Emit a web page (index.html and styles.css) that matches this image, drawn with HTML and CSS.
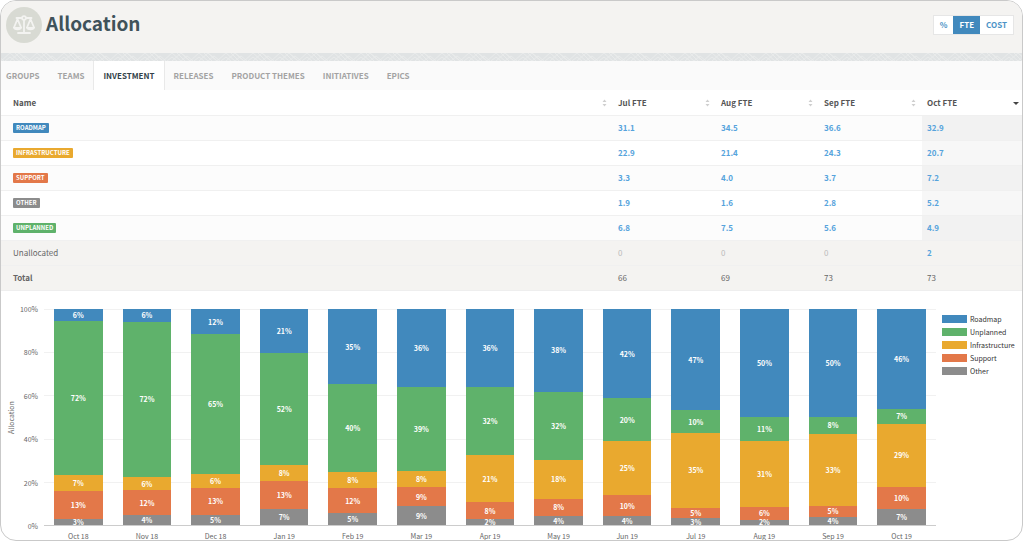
FILE: index.html
```html
<!DOCTYPE html>
<html lang="en">
<head>
<meta charset="utf-8">
<title>Allocation</title>
<link rel="stylesheet" href="styles.css">
</head>
<body>
<main class="card">
  <header class="header">
    <svg class="logo" viewBox="0 0 36 36" aria-hidden="true">
      <circle cx="18" cy="18" r="18" fill="#d8dad3"/>
      <g fill="none" stroke="#f3f3f1" stroke-width="1.800" stroke-linecap="round" stroke-linejoin="round">
        <path d="M10.500 11H15.500M20.500 11H25.500M18 13V25.500M12 26H24"/>
        <circle cx="18" cy="11" r="1.900"/>
        <path d="M11.500 12L8 20.500M11.500 12L15 20.500M24.500 12L21 20.500M24.500 12L28 20.500"/>
      </g>
      <path fill="#f3f3f1" d="M7 20H16Q15.500 23.200 11.500 23.200Q7.500 23.200 7 20ZM20 20H29Q28.500 23.200 24.500 23.200Q20.500 23.200 20 20Z"/>
    </svg>
    <h1 class="title">Allocation</h1>
    <div class="units">
      <button class="unit" type="button">%</button>
      <button class="unit unit-active" type="button">FTE</button>
      <button class="unit" type="button">COST</button>
    </div>
  </header>
  <svg class="band" aria-hidden="true">
    <defs>
      <pattern id="chevrons" width="27" height="8" patternUnits="userSpaceOnUse">
        <path d="M0 8L9 0L18 8M4 8L9 4L14 8M13 -1L22 8M17 -1L27 8M9 8L18 0L27 8M18 8L24 3L30 8M-9 8L-3 3L3 8" fill="none" stroke="#e9ebeb" stroke-width="1"/>
      </pattern>
    </defs>
    <rect width="100%" height="8" fill="url(#chevrons)"/>
  </svg>
  <nav class="tabs">
    <a class="tab" href="#groups">GROUPS</a>
    <a class="tab" href="#teams">TEAMS</a>
    <a class="tab tab-active" href="#investment" aria-current="page">INVESTMENT</a>
    <a class="tab" href="#releases">RELEASES</a>
    <a class="tab" href="#themes">PRODUCT THEMES</a>
    <a class="tab" href="#initiatives">INITIATIVES</a>
    <a class="tab" href="#epics">EPICS</a>
  </nav>
  <table class="table">
    <colgroup><col><col class="month"><col class="month"><col class="month"><col class="month-last"></colgroup>
    <thead>
      <tr>
        <th><div class="head">Name<svg class="sort" viewBox="0 0 5 8"><path d="M0.500 3L2.500 0.500L4.500 3ZM0.500 5L2.500 7.500L4.500 5Z"/></svg></div></th>
        <th><div class="head">Jul FTE<svg class="sort" viewBox="0 0 5 8"><path d="M0.500 3L2.500 0.500L4.500 3ZM0.500 5L2.500 7.500L4.500 5Z"/></svg></div></th>
        <th><div class="head">Aug FTE<svg class="sort" viewBox="0 0 5 8"><path d="M0.500 3L2.500 0.500L4.500 3ZM0.500 5L2.500 7.500L4.500 5Z"/></svg></div></th>
        <th><div class="head">Sep FTE<svg class="sort" viewBox="0 0 5 8"><path d="M0.500 3L2.500 0.500L4.500 3ZM0.500 5L2.500 7.500L4.500 5Z"/></svg></div></th>
        <th><div class="head">Oct FTE<svg class="sorted" viewBox="0 0 6 3"><path d="M0 0H6L3 3Z"/></svg></div></th>
      </tr>
    </thead>
    <tbody>
      <tr><td><span class="tag roadmap">ROADMAP</span></td><td><a href="#r7">31.1</a></td><td><a href="#r8">34.5</a></td><td><a href="#r9">36.6</a></td><td><a href="#r10">32.9</a></td></tr>
      <tr><td><span class="tag infrastructure">INFRASTRUCTURE</span></td><td><a href="#i7">22.9</a></td><td><a href="#i8">21.4</a></td><td><a href="#i9">24.3</a></td><td><a href="#i10">20.7</a></td></tr>
      <tr><td><span class="tag support">SUPPORT</span></td><td><a href="#s7">3.3</a></td><td><a href="#s8">4.0</a></td><td><a href="#s9">3.7</a></td><td><a href="#s10">7.2</a></td></tr>
      <tr><td><span class="tag other">OTHER</span></td><td><a href="#o7">1.9</a></td><td><a href="#o8">1.6</a></td><td><a href="#o9">2.8</a></td><td><a href="#o10">5.2</a></td></tr>
      <tr><td><span class="tag unplanned">UNPLANNED</span></td><td><a href="#u7">6.8</a></td><td><a href="#u8">7.5</a></td><td><a href="#u9">5.6</a></td><td><a href="#u10">4.9</a></td></tr>
    </tbody>
    <tfoot>
      <tr><td>Unallocated</td><td class="zero">0</td><td class="zero">0</td><td class="zero">0</td><td><a href="#n10">2</a></td></tr>
      <tr><th scope="row">Total</th><td>66</td><td>69</td><td>73</td><td>73</td></tr>
    </tfoot>
  </table>
  <section class="chart">
    <div class="axis-title">Allocation</div>
    <div class="scale"><span>100%</span><span>80%</span><span>60%</span><span>40%</span><span>20%</span><span>0%</span></div>
    <div class="plot">
      <div class="bars">
        <div class="bar"><span class="roadmap" style="height:5.7%">6%</span><span class="unplanned" style="height:71.3%">72%</span><span class="infrastructure" style="height:7.2%">7%</span><span class="support" style="height:12.9%">13%</span><span class="other" style="height:2.9%">3%</span></div>
        <div class="bar"><span class="roadmap" style="height:5.8%">6%</span><span class="unplanned" style="height:72%">72%</span><span class="infrastructure" style="height:6%">6%</span><span class="support" style="height:11.7%">12%</span><span class="other" style="height:4.5%">4%</span></div>
        <div class="bar"><span class="roadmap" style="height:11.7%">12%</span><span class="unplanned" style="height:64.8%">65%</span><span class="infrastructure" style="height:6.3%">6%</span><span class="support" style="height:12.6%">13%</span><span class="other" style="height:4.6%">5%</span></div>
        <div class="bar"><span class="roadmap" style="height:20.5%">21%</span><span class="unplanned" style="height:51.5%">52%</span><span class="infrastructure" style="height:7.7%">8%</span><span class="support" style="height:13.1%">13%</span><span class="other" style="height:7.2%">7%</span></div>
        <div class="bar"><span class="roadmap" style="height:34.9%">35%</span><span class="unplanned" style="height:40.5%">40%</span><span class="infrastructure" style="height:7.7%">8%</span><span class="support" style="height:11.5%">12%</span><span class="other" style="height:5.4%">5%</span></div>
        <div class="bar"><span class="roadmap" style="height:36%">36%</span><span class="unplanned" style="height:38.8%">39%</span><span class="infrastructure" style="height:7.7%">8%</span><span class="support" style="height:8.9%">9%</span><span class="other" style="height:8.6%">9%</span></div>
        <div class="bar"><span class="roadmap" style="height:36%">36%</span><span class="unplanned" style="height:31.8%">32%</span><span class="infrastructure" style="height:21.4%">21%</span><span class="support" style="height:8.2%">8%</span><span class="other" style="height:2.6%">2%</span></div>
        <div class="bar"><span class="roadmap" style="height:38.2%">38%</span><span class="unplanned" style="height:31.7%">32%</span><span class="infrastructure" style="height:18%">18%</span><span class="support" style="height:8%">8%</span><span class="other" style="height:4.1%">4%</span></div>
        <div class="bar"><span class="roadmap" style="height:41.4%">42%</span><span class="unplanned" style="height:19.8%">20%</span><span class="infrastructure" style="height:25.1%">25%</span><span class="support" style="height:9.7%">10%</span><span class="other" style="height:4%">4%</span></div>
        <div class="bar"><span class="roadmap" style="height:46.9%">47%</span><span class="unplanned" style="height:10.5%">10%</span><span class="infrastructure" style="height:34.6%">35%</span><span class="support" style="height:4.9%">5%</span><span class="other" style="height:3.1%">3%</span></div>
        <div class="bar"><span class="roadmap" style="height:50%">50%</span><span class="unplanned" style="height:10.9%">11%</span><span class="infrastructure" style="height:30.8%">31%</span><span class="support" style="height:5.8%">6%</span><span class="other" style="height:2.5%">2%</span></div>
        <div class="bar"><span class="roadmap" style="height:50%">50%</span><span class="unplanned" style="height:7.7%">8%</span><span class="infrastructure" style="height:33.4%">33%</span><span class="support" style="height:5.1%">5%</span><span class="other" style="height:3.8%">4%</span></div>
        <div class="bar"><span class="roadmap" style="height:46.3%">46%</span><span class="unplanned" style="height:6.9%">7%</span><span class="infrastructure" style="height:29.2%">29%</span><span class="support" style="height:10%">10%</span><span class="other" style="height:7.6%">7%</span></div>
      </div>
      <div class="months"><span>Oct 18</span><span>Nov 18</span><span>Dec 18</span><span>Jan 19</span><span>Feb 19</span><span>Mar 19</span><span>Apr 19</span><span>May 19</span><span>Jun 19</span><span>Jul 19</span><span>Aug 19</span><span>Sep 19</span><span>Oct 19</span></div>
    </div>
    <ul class="legend">
      <li><i class="swatch roadmap"></i>Roadmap</li>
      <li><i class="swatch unplanned"></i>Unplanned</li>
      <li><i class="swatch infrastructure"></i>Infrastructure</li>
      <li><i class="swatch support"></i>Support</li>
      <li><i class="swatch other"></i>Other</li>
    </ul>
  </section>
</main>
</body>
</html>
```
FILE: styles.css
```css
* { box-sizing: border-box; }
body {
  margin: 0;
  background: #fff;
  color: #666;
  font: 8px/10px "Noto Sans CJK SC", "Noto Sans", sans-serif;
}
a { color: inherit; text-decoration: none; }
.card {
  min-height: 100vh;
  margin-right: 1px;
  border: 1px solid #c9c9c9;
  border-radius: 16px;
  overflow: hidden;
  background: #fff;
}

.roadmap { background: #4189bd; }
.unplanned { background: #5fb26b; }
.infrastructure { background: #e9a92f; }
.support { background: #e37849; }
.other { background: #8c8c8c; }

.header {
  display: flex;
  align-items: center;
  gap: 4px;
  height: 52px;
  padding: 0 8px 4px 5px;
  background: #f4f3f1;
}
.logo { width: 36px; height: 36px; }
.title {
  flex: 1;
  margin: 0;
  padding-bottom: 4px;
  color: #40525a;
  font-size: 19px;
  line-height: 24px;
  font-weight: 700;
}
.units {
  display: flex;
  border: 1px solid #e6e6e6;
  background: #fff;
}
.unit {
  height: 18px;
  padding: 0 6px;
  border: 0;
  background: #fff;
  color: #4b93c6;
  font: 700 8px/18px "Noto Sans CJK SC", "Noto Sans", sans-serif;
}
.unit-active { background: #4189bd; color: #fff; }
.band { display: block; width: 100%; height: 8px; background: #e0e3e4; }

.tabs { display: flex; height: 29px; background: #fafafa; }
.tab {
  padding: 0 9px;
  color: #a3a3a3;
  font-weight: 700;
  line-height: 29px;
}
.tab:first-child { padding-left: 5px; }
.tab-active {
  border: solid #e9e9e9;
  border-width: 0 1px;
  background: #fff;
  color: #33424a;
}

.table { width: 100%; table-layout: fixed; border-collapse: separate; border-spacing: 0; }
.month { width: 103px; }
.month-last { width: 100px; }
.table th, .table td {
  height: 25px;
  padding: 0 5px;
  border-top: 1px solid #f0f0f0;
  text-align: left;
  line-height: 12px;
  vertical-align: middle;
}
.table thead th { border-top-color: #fff; color: #555; }
.table th:first-child, .table td:first-child { padding-left: 12px; }
.head { display: flex; align-items: center; justify-content: space-between; }
.sort { width: 5px; height: 8px; margin-right: 1px; fill: #cfcfcf; }
.sorted { width: 6px; height: 3px; margin-right: -2px; fill: #444; }
.table tbody tr:nth-child(odd) { background: #fcfcfc; }
.table tbody td:last-child { background: #f7f7f7; }
.table tbody tr:nth-child(odd) td:last-child { background: #f2f2f2; }
.table td a { color: #56a3dc; font-weight: 700; }
.table tfoot { background: #f4f3f1; }
.table tfoot .zero { color: #bbb; }
.tag {
  display: block;
  width: fit-content;
  padding: 0 3px;
  border-radius: 1px;
  color: #fff;
  font-size: 6px;
  font-weight: 700;
  line-height: 10px;
}

.chart {
  display: flex;
  padding: 18px 6px 0 5px;
  border-top: 1px solid #eee;
  font-size: 7px;
}
.axis-title {
  width: 10px;
  height: 217px;
  writing-mode: vertical-rl;
  transform: rotate(180deg);
  text-align: center;
}
.scale {
  display: flex;
  flex-direction: column;
  justify-content: space-between;
  width: 22px;
  height: 227px;
  margin: -5px 6px -5px 0;
  text-align: right;
}
.plot { flex: 1; }
.bars {
  display: flex;
  height: 217px;
  border: solid #ccc;
  border-width: 0 0 1px;
  background: repeating-linear-gradient(to bottom, #f1f1f1 0 1px, transparent 1px 20%);
}
.bar {
  flex: 1;
  margin: 0 10px;
}
.bar span {
  display: flex;
  align-items: center;
  justify-content: center;
  color: #fff;
  font-weight: 700;
  line-height: 8px;
}
.months { display: flex; margin-top: 6px; line-height: 8px; }
.months span { flex: 1; text-align: center; }
.legend {
  display: flex;
  flex-direction: column;
  gap: 3px;
  width: 74px;
  margin: 5px 0 0 6px;
  padding: 0;
  list-style: none;
  color: #333;
}
.legend li { display: flex; align-items: center; gap: 3px; white-space: nowrap; }
.swatch { width: 25px; height: 8px; }
```
